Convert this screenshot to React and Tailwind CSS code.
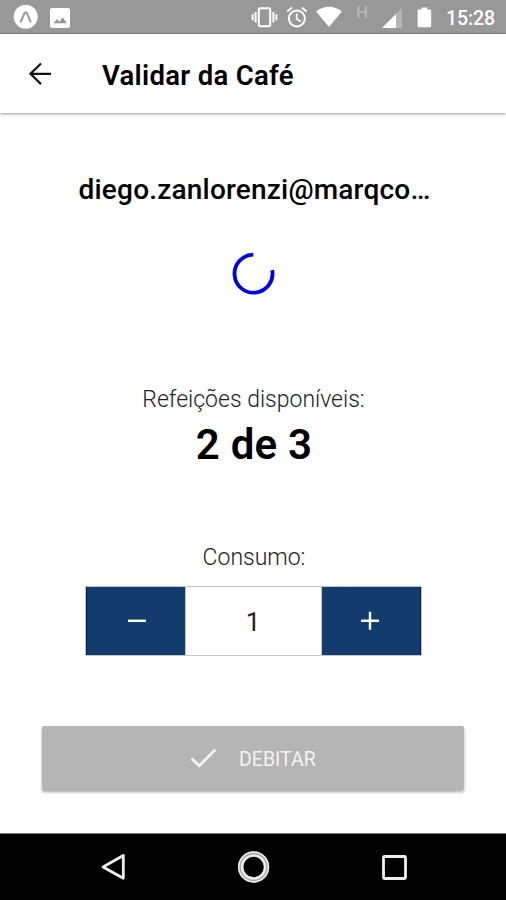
import { useState } from 'react'

function StatusBar() {
  return (
    <div className="flex h-[34px] items-center border-b border-[#858585] bg-[#989898] text-white">
      <svg className="ml-[13px] h-[25px] w-[25px]" viewBox="0 0 25 25">
        <circle cx="12.7" cy="12.8" r="12" fill="currentColor" />
        <path d="M7.8 17.6 L11.4 9.4 Q12.7 7.4 14 9.4 L17.6 17.6" fill="none" stroke="#989898" strokeWidth="2" strokeLinecap="round" />
      </svg>
      <svg className="ml-[12px] mt-[2px] h-[20px] w-[20px]" viewBox="0 0 20 20">
        <rect width="20" height="20" rx="2.2" fill="currentColor" />
        <path d="M3.5 15.3 L7 11 L9.4 13.7 L12.7 9.2 L16.8 15.3 Z" fill="#989898" />
      </svg>

      <svg className="ml-[181px] h-[22px] w-[28px]" viewBox="0 0 28 22" fill="none" stroke="currentColor" strokeWidth="2">
        <rect x="7.8" y="2.2" width="11.4" height="18" rx="1.2" />
        <path d="M4.6 6 V16.5 M22.4 6 V16.5 M1.6 8.2 V14.2 M25.4 8.2 V14.2" />
      </svg>
      <svg className="ml-[7px] h-[22px] w-[22px]" viewBox="0 0 22 22" fill="none" stroke="currentColor" strokeWidth="2">
        <circle cx="10.9" cy="12.5" r="8" />
        <path d="M1.2 5.4 L6 1.4 M20.6 5.4 L15.8 1.4" />
        <path d="M10.7 7.5 V13 L14.8 15.5" strokeWidth="1.7" />
      </svg>
      <svg className="ml-[8px] h-[21px] w-[26px]" viewBox="0 0 26 21">
        <path d="M0.2 5.4 Q13 -3.8 25.8 5.4 L13 21 Z" fill="currentColor" />
      </svg>
      <span className="ml-[14px] -mt-[8px] w-[14px] text-[17px] font-medium leading-none text-[#b9b9b9]">H</span>
      <svg className="ml-[12px] mt-[3px] h-[20px] w-[20px]" viewBox="0 0 20 20">
        <path d="M0 20 L20 0 V20 Z" fill="#b5b5b5" />
        <path d="M0 20 L14 6 V20 Z" fill="currentColor" />
      </svg>
      <svg className="ml-[15px] mt-[2px] h-[21px] w-[15px]" viewBox="0 0 15 21">
        <path d="M4.5 0.5 H10.3 V2.4 H13 Q14.2 2.4 14.2 3.6 V19 Q14.2 20.2 13 20.2 H1.8 Q0.6 20.2 0.6 19 V3.6 Q0.6 2.4 1.8 2.4 H4.5 Z" fill="currentColor" />
      </svg>
      <span className="ml-[14px] mt-[4px] text-[19.5px] font-medium leading-none tracking-[-0.1px]">15:28</span>
    </div>
  )
}

function Header() {
  return (
    <header className="flex h-[79px] items-center bg-white shadow-[0_1px_3px_rgba(0,0,0,0.4)]">
      <button className="ml-[28px] h-[24px] w-[24px]" aria-label="Voltar">
        <svg viewBox="0 0 24 24" fill="none" stroke="#111" strokeWidth="2.2">
          <path d="M23 11.8 H2.5 M13 1.5 L2.5 11.8 L13 22.1" />
        </svg>
      </button>
      <h1 className="ml-[50px] mt-[5px] whitespace-nowrap text-[27.5px] font-semibold leading-[28px] tracking-[0.3px] text-black">
        Validar da Café
      </h1>
    </header>
  )
}

function Spinner() {
  return (
    <svg className="h-[44px] w-[44px]" viewBox="0 0 44 44">
      <path d="M22.3 3.7 A19 19 0 1 0 41.2 19.2" fill="none" stroke="#0000f0" strokeWidth="3.8" />
    </svg>
  )
}

function Stepper({ value, onChange }) {
  return (
    <div className="flex h-[70px] w-[337px] border border-[#c4c4cc] text-white">
      <button
        onClick={() => onChange(Math.max(1, value - 1))}
        className="flex w-[99px] items-center justify-center border-l border-[#0c1467] bg-[#123c6d]"
        aria-label="Diminuir"
      >
        <svg className="ml-[2px] h-[20px] w-[20px]" viewBox="0 0 20 20">
          <path d="M1 9.8 H19" stroke="currentColor" strokeWidth="2.4" />
        </svg>
      </button>
      <span className="flex flex-1 items-center justify-center border-x border-[#c4c4cc] pt-[2px] text-[26px] leading-none text-[#222]">
        {value}
      </span>
      <button
        onClick={() => onChange(value + 1)}
        className="flex w-[99px] items-center justify-center border-r border-[#0c1467] bg-[#123c6d]"
        aria-label="Aumentar"
      >
        <svg className="mr-[2px] h-[20px] w-[20px]" viewBox="0 0 20 20">
          <path d="M1 9.8 H19 M10 0.8 V18.8" stroke="currentColor" strokeWidth="2.4" />
        </svg>
      </button>
    </div>
  )
}

function NavBar() {
  return (
    <nav className="flex h-[67px] items-center border-t border-[#777] bg-black text-[#eee]">
      <svg className="ml-[100px] h-[28px] w-[26px]" viewBox="0 0 26 28">
        <path d="M23.3 2.5 V25.3 L3 14 Z" fill="none" stroke="currentColor" strokeWidth="2.8" strokeLinejoin="round" />
      </svg>
      <svg className="ml-[111px] h-[34px] w-[34px]" viewBox="0 0 34 34" fill="none">
        <circle cx="16.6" cy="17" r="13.3" stroke="#a9a9a9" strokeWidth="4.6" />
        <circle cx="16.6" cy="17" r="14.9" stroke="currentColor" strokeWidth="1.5" />
        <circle cx="16.6" cy="17" r="11.4" stroke="currentColor" strokeWidth="2.4" />
      </svg>
      <svg className="ml-[111px] h-[25px] w-[25px]" viewBox="0 0 25 25">
        <rect x="1.5" y="1.5" width="22" height="22" rx="1" fill="none" stroke="currentColor" strokeWidth="2.8" />
      </svg>
    </nav>
  )
}

export default function App() {
  const [amount, setAmount] = useState(1)

  return (
    <div className="flex h-[900px] w-[506px] flex-col overflow-hidden bg-white font-['Roboto',sans-serif]">
      <StatusBar />
      <Header />

      <main className="flex flex-1 flex-col items-center">
        <p className="mt-[61px] whitespace-nowrap pl-[3px] text-center text-[28px] font-medium leading-[32px] tracking-[0.2px] text-black">
          diego.zanlorenzi@marqco…
        </p>
        <div className="mt-[45px]">
          <Spinner />
        </div>

        <p className="mt-[91px] whitespace-nowrap pl-px text-[23px] font-light leading-[28px] text-[#222]">Refeições disponíveis:</p>
        <p className="mt-[6px] whitespace-nowrap pl-[2px] text-[42px] font-semibold leading-[50px] tracking-[0.2px] text-black">2 de 3</p>

        <p className="mt-[74px] pl-[2px] text-[23px] font-light leading-[28px] text-[#222]">Consumo:</p>
        <div className="mt-[14px]">
          <Stepper value={amount} onChange={setAmount} />
        </div>

        <button className="mt-[70px] flex h-[64px] w-[422px] items-center rounded-[2px] bg-[#b5b5b5] text-[#f4f4f4] shadow-[0_2px_3px_rgba(0,0,0,0.35)]">
          <svg className="ml-[148px] h-[20px] w-[27px]" viewBox="0 0 27 20">
            <path d="M1.5 10.5 L9.3 17.8 L25.2 1.8" fill="none" stroke="currentColor" strokeWidth="2.8" />
          </svg>
          <span className="ml-[22px] mt-[3px] text-[19.5px] leading-none">DEBITAR</span>
        </button>
      </main>

      <NavBar />
    </div>
  )
}
